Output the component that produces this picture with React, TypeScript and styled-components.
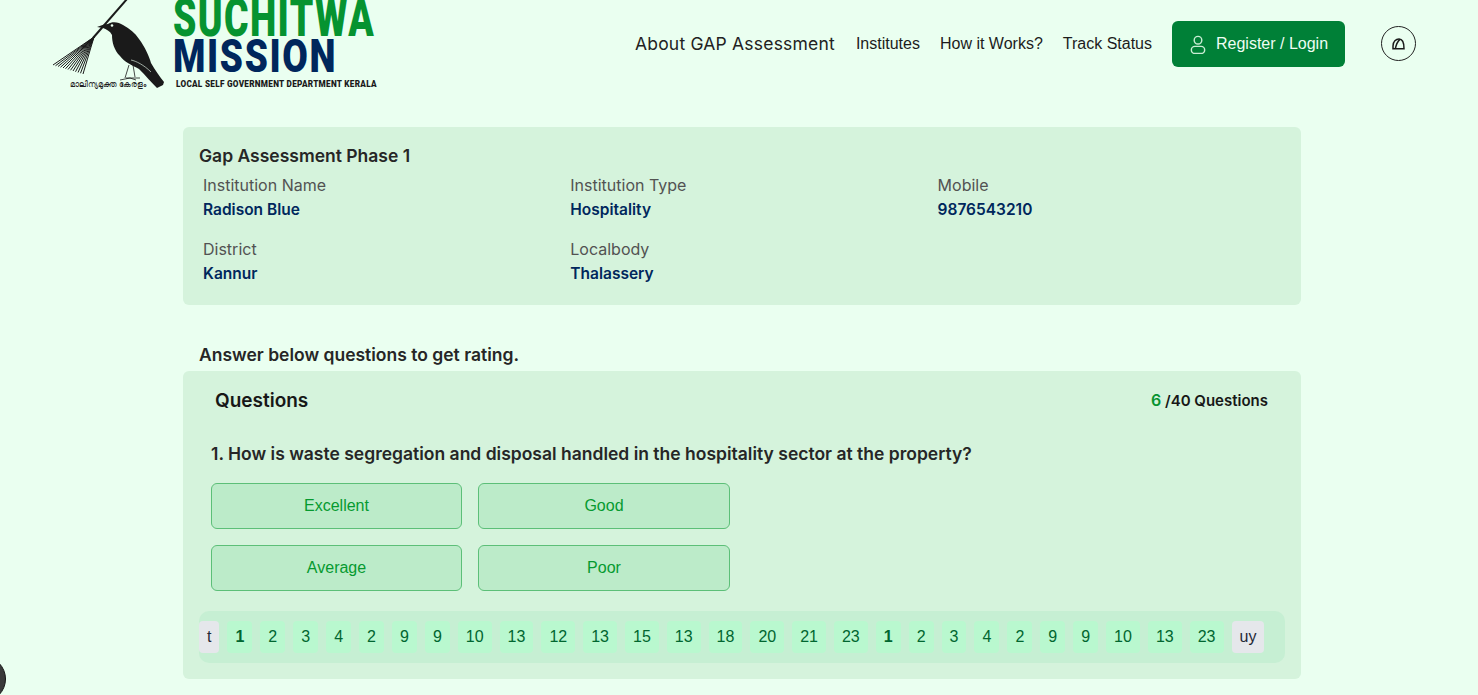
import React from "react";
import styled, { createGlobalStyle } from "styled-components";

const Global = createGlobalStyle`
  html, body { margin: 0; padding: 0; overflow: hidden; background: #eafff0; }
  body { font-family: "Liberation Sans", Arial, sans-serif; }
  * { box-sizing: border-box; }
`;

const cardFont = `Inter, "Noto Sans", sans-serif`;

const Page = styled.div`
  width: 1478px;
  height: 695px;
  position: relative;
  overflow: hidden;
  background: #eafff0;
`;

const Header = styled.header`
  height: 87px;
  padding: 0 62px 0 52px;
  display: flex;
  align-items: center;
  justify-content: space-between;
`;

const LogoSvg = styled.svg`
  width: 330px;
  height: 92px;
  align-self: flex-start;
  flex: none;
  overflow: visible;
`;

const Nav = styled.nav`
  display: flex;
  align-items: center;
  gap: 20px;
  color: #1f2937;
  font-size: 16px;
`;

const NavLead = styled.a`
  font-family: ${cardFont};
  font-size: 17.5px;
  letter-spacing: 0.2px;
  color: #222;
  margin-right: 1px;
`;

const NavLink = styled.a`
  color: #1c1c1c;
  font-size: 16px;
`;

const RegisterButton = styled.button`
  width: 173px;
  height: 46px;
  border: 0;
  border-radius: 6px;
  background: #008037;
  color: #eefdf3;
  font: 16px "Liberation Sans", Arial, sans-serif;
  display: flex;
  align-items: center;
  justify-content: center;
  gap: 10px;
  padding: 0 0 0 1px;
`;

const ThemeButton = styled.button`
  width: 35px;
  height: 35px;
  margin-left: 16px;
  border: 1px solid #222;
  border-radius: 50%;
  background: transparent;
  display: flex;
  align-items: center;
  justify-content: center;
  padding: 0;
`;

const Main = styled.main`
  width: 1118px;
  margin: 40px 0 0 183px;
  font-family: ${cardFont};
`;

const InfoCard = styled.section`
  height: 178px;
  background: #d5f3dc;
  border-radius: 6px;
  padding: 18px 16px 0;
`;

const InfoTitle = styled.h2`
  margin: 0 0 7px;
  font-size: 17.5px;
  line-height: 22px;
  font-weight: 600;
  color: #262626;
`;

const InfoGrid = styled.div`
  display: grid;
  grid-template-columns: repeat(3, 367.3px);
  row-gap: 15px;
  padding-left: 4px;
`;

const Field = styled.div`
  display: flex;
  flex-direction: column;
`;

const FieldLabel = styled.span`
  font-size: 16px;
  line-height: 22px;
  color: #525252;
`;

const FieldValue = styled.span`
  font-size: 15.5px;
  line-height: 27px;
  font-weight: 600;
  color: #00275c;
`;

const Prompt = styled.h3`
  margin: 38px 0 0 16px;
  font-size: 17.5px;
  line-height: 24px;
  font-weight: 600;
  color: #262626;
`;

const QuestionCard = styled.section`
  margin-top: 4px;
  height: 308px;
  background: #d5f3dc;
  border-radius: 6px;
  padding: 15px 16px 0;
`;

const QuestionHead = styled.div`
  display: flex;
  align-items: center;
  justify-content: space-between;
  padding: 0 17px 0 16px;
  height: 28px;
`;

const QuestionsTitle = styled.h2`
  margin: 0;
  font-size: 19px;
  font-weight: 600;
  color: #171717;
`;

const Count = styled.div`
  font-size: 15px;
  font-weight: 600;
  color: #171717;
`;

const CountNow = styled.span`
  font-size: 16px;
  color: #069330;
`;

const QuestionText = styled.p`
  margin: 28px 0 0 12px;
  font-size: 17.5px;
  line-height: 24px;
  font-weight: 600;
  color: #262626;
`;

const Options = styled.div`
  margin: 17px 0 0 12px;
  width: 519px;
  display: grid;
  grid-template-columns: 251px 252px;
  gap: 16px;
`;

const Option = styled.button`
  height: 46px;
  border: 1px solid #5cbf78;
  border-radius: 6px;
  background: #bcebc9;
  color: #069a30;
  font: 16px "Liberation Sans", Arial, sans-serif;
  padding: 0;
`;

const Pager = styled.div`
  margin-top: 20px;
  height: 52px;
  background: #c6efd3;
  border-radius: 10px;
  display: flex;
  align-items: center;
  gap: 8px;
  font-family: "Liberation Sans", Arial, sans-serif;
`;

const PageChip = styled.span<{ $bold?: boolean; $muted?: boolean }>`
  height: 32px;
  padding: 0 8px;
  border-radius: 4px;
  display: flex;
  align-items: center;
  font-size: 16px;
  font-weight: ${(p) => (p.$bold ? 700 : 400)};
  background: ${(p) => (p.$muted ? "#e5e7eb" : "#b9f8cf")};
  color: ${(p) => (p.$muted ? "#1f2937" : "#016630")};
`;

const CornerDot = styled.div`
  position: absolute;
  left: -40px;
  top: 656px;
  width: 46px;
  height: 46px;
  border-radius: 50%;
  background: #3a3a3a;
  border: 1px solid #151515;
`;

const bristles = Array.from({ length: 13 }, (_, i) => {
  const t = i / 12;
  return { x: 53 + 30 * t, y: 65 + 9 * t };
});

const Logo = () => (
  <LogoSvg viewBox="52 0 330 92" aria-label="Suchitwa Mission">
    <line x1="127" y1="-1" x2="93" y2="38" stroke="#1a1a1a" strokeWidth="2" />
    {bristles.map((b, i) => (
      <line key={i} x1="94" y1="37" x2={b.x} y2={b.y} stroke="#1a1a1a" strokeWidth="1" />
    ))}
    <path
      d="M97 27 C102 25 105 24 108 24 C112 21 119 22 123 25 C130 29 135 33 139 39 C145 47 149 56 151 63 C155 70 160 77 164 82 L163 85 L157 88 C151 82 146 76 139 69 C132 65 124 62 120 56 C114 50 112 42 112 35 C110 31 106 29 103 28 Z"
      fill="#1a1a1a"
    />
    <circle cx="112" cy="25.5" r="1.3" fill="#eafff0" />
    <path d="M131 60 C136 61 144 65 151 72" stroke="#d8e8dc" strokeWidth="0.7" fill="none" />
    <path
      d="M129 65 L125 78 M133 65 L135 77 M120 80 L130 78 L136 80 M126 78 L140 78"
      stroke="#1a1a1a"
      strokeWidth="0.8"
      fill="none"
    />
    <text x="70" y="87" fontSize="8" fill="#222" textLength="76" lengthAdjust="spacingAndGlyphs" fontFamily="'Noto Sans', sans-serif">
      മാലിന്യമുക്ത കേരളം
    </text>
    <text x="173" y="36" fontSize="54" fontWeight="900" letterSpacing="2" fill="#069330" textLength="202" lengthAdjust="spacingAndGlyphs" fontFamily="Roboto, sans-serif">
      SUCHITWA
    </text>
    <text x="173" y="72" fontSize="46" fontWeight="900" letterSpacing="2" fill="#00275c" textLength="164" lengthAdjust="spacingAndGlyphs" fontFamily="Roboto, sans-serif">
      MISSION
    </text>
    <text x="176" y="86.5" fontSize="8.2" fontWeight="900" fill="#1a1a1a" textLength="200.5" lengthAdjust="spacing" fontFamily="Roboto, sans-serif">
      LOCAL SELF GOVERNMENT DEPARTMENT KERALA
    </text>
  </LogoSvg>
);

const UserIcon = () => (
  <svg width="16" height="20" viewBox="2 0 16 21" fill="none" stroke="#c9ecd4" strokeWidth="1.5">
    <circle cx="10" cy="6.5" r="4" />
    <rect x="3" y="13" width="14" height="7.5" rx="3.7" />
  </svg>
);

const ThemeIcon = () => (
  <svg width="13" height="12" viewBox="0 0 39 36" fill="none" stroke="#1a1a1a" strokeWidth="4.5">
    <path d="M3 32 L3 24 C3 10 12 3 21 3 C31 3 36 12 36 32 Z" />
    <path d="M10 32 C12 22 17 10 24 4" />
  </svg>
);

const fields = [
  ["Institution Name", "Radison Blue"],
  ["Institution Type", "Hospitality"],
  ["Mobile", "9876543210"],
  ["District", "Kannur"],
  ["Localbody", "Thalassery"],
];

const pages = ["1", "2", "3", "4", "2", "9", "9", "10", "13", "12", "13", "15", "13", "18", "20", "21", "23", "1", "2", "3", "4", "2", "9", "9", "10", "13", "23"];

export default function App() {
  return (
    <Page>
      <Global />
      <Header>
        <Logo />
        <Nav>
          <NavLead>About GAP Assessment</NavLead>
          <NavLink>Institutes</NavLink>
          <NavLink>How it Works?</NavLink>
          <NavLink>Track Status</NavLink>
          <RegisterButton>
            <UserIcon />
            Register / Login
          </RegisterButton>
          <ThemeButton aria-label="Theme">
            <ThemeIcon />
          </ThemeButton>
        </Nav>
      </Header>
      <Main>
        <InfoCard>
          <InfoTitle>Gap Assessment Phase 1</InfoTitle>
          <InfoGrid>
            {fields.map(([label, value]) => (
              <Field key={label}>
                <FieldLabel>{label}</FieldLabel>
                <FieldValue>{value}</FieldValue>
              </Field>
            ))}
          </InfoGrid>
        </InfoCard>
        <Prompt>Answer below questions to get rating.</Prompt>
        <QuestionCard>
          <QuestionHead>
            <QuestionsTitle>Questions</QuestionsTitle>
            <Count>
              <CountNow>6</CountNow> /40 Questions
            </Count>
          </QuestionHead>
          <QuestionText>1. How is waste segregation and disposal handled in the hospitality sector at the property?</QuestionText>
          <Options>
            <Option>Excellent</Option>
            <Option>Good</Option>
            <Option>Average</Option>
            <Option>Poor</Option>
          </Options>
          <Pager>
            <PageChip $muted>t</PageChip>
            {pages.map((n, i) => (
              <PageChip key={i} $bold={n === "1"}>
                {n}
              </PageChip>
            ))}
            <PageChip $muted>uy</PageChip>
          </Pager>
        </QuestionCard>
      </Main>
      <CornerDot />
    </Page>
  );
}
